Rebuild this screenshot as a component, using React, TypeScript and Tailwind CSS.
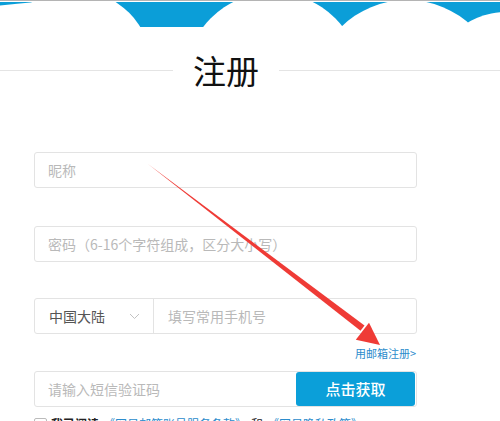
import { useState } from "react";

const CloudBand = () => (
  <svg width="500" height="27" viewBox="0 0 500 27" className="block">
    <rect x="0" y="1" width="500" height="25" fill="#0b9ed8" />
    <path d="M0 4.5 Q 18 2.5 33 1.2 L 60 27 L 0 27 Z" fill="#fff" />
    <circle cx="74" cy="67" r="78" fill="#fff" />
    <circle cx="273" cy="79.5" r="88" fill="#fff" />
    <circle cx="407" cy="93" r="94" fill="#fff" />
    <circle cx="506" cy="86" r="75" fill="#fff" />
  </svg>
);

const RedArrow = () => (
  <svg
    width="500"
    height="421"
    viewBox="0 0 500 421"
    className="absolute left-0 top-0 pointer-events-none"
  >
    <polygon points="148,164 364.5,325.5 360.5,330.8" fill="#ef3b36" />
    <polygon points="380,345 355.8,339.8 369,322.8" fill="#ef3b36" />
  </svg>
);

const TextInput = ({ placeholder }: { placeholder: string }) => (
  <div className="h-[36px] w-full rounded-[3px] border border-[#e3e3e3] bg-white flex items-center">
    <input
      className="w-full h-full px-[13px] text-[14px] outline-none bg-transparent placeholder:text-[#b9b9b9] text-[#333]"
      placeholder={placeholder}
    />
  </div>
);

const App = () => {
  const [agree, setAgree] = useState(false);

  return (
    <div
      className="relative w-[500px] h-[421px] overflow-hidden bg-white"
      style={{ fontFamily: '"Noto Sans CJK SC", "Noto Sans", sans-serif' }}
    >
      <div className="h-px bg-[#b4b4b4]" />
      <CloudBand />

      {/* title */}
      <div className="flex items-center mt-[19px] h-[46px]">
        <div className="w-[173px] h-px bg-[#e4e4e4]" />
        <div className="w-[106px] text-center text-[33px] leading-none text-[#111]">
          注册
        </div>
        <div className="flex-1 h-px bg-[#e4e4e4]" />
      </div>

      {/* form */}
      <div className="ml-[34px] w-[383px] mt-[59px] flex flex-col">
        <TextInput placeholder="昵称" />

        <div className="mt-[38px]">
          <TextInput placeholder="密码（6-16个字符组成，区分大小写）" />
        </div>

        <div className="mt-[36px] h-[36px] rounded-[3px] border border-[#e3e3e3] flex items-center">
          <div className="w-[119px] h-full flex items-center justify-between pl-[14px] pr-[13px] border-r border-[#e3e3e3]">
            <span className="text-[14px] text-[#555]">中国大陆</span>
            <svg width="11" height="7" viewBox="0 0 11 7">
              <path d="M1 1 L5.5 5.5 L10 1" stroke="#c2c2c2" strokeWidth="1" fill="none" />
            </svg>
          </div>
          <input
            className="flex-1 h-full px-[14px] text-[14px] outline-none bg-transparent placeholder:text-[#b9b9b9]"
            placeholder="填写常用手机号"
          />
        </div>

        <div className="flex justify-end mt-[11px] h-[16px] items-center">
          <span className="text-[11px] leading-none text-[#2b8ccc] pr-[1px]">
            用邮箱注册&gt;
          </span>
        </div>

        <div className="mt-[10px] h-[36px] rounded-[3px] border border-[#e3e3e3] flex items-center">
          <input
            className="flex-1 h-full px-[13px] text-[14px] outline-none bg-transparent placeholder:text-[#b9b9b9]"
            placeholder="请输入短信验证码"
          />
          <button className="w-[119px] h-[34px] mr-px rounded-[3px] bg-[#0b9fd9] text-white text-[15px] font-medium">
            点击获取
          </button>
        </div>

        <div className="mt-[8px] flex items-center gap-[4px] text-[12px] whitespace-nowrap">
          <button
            onClick={() => setAgree(!agree)}
            className="w-[13px] h-[13px] border border-[#bbb] rounded-[2px] bg-white"
          >
            {agree ? "✓" : ""}
          </button>
          <span className="text-[#222] font-bold">我已阅读</span>
          <span className="text-[#2b8ccc]">《网易邮箱账号服务条款》</span>
          <span className="text-[#222]">和</span>
          <span className="text-[#2b8ccc]">《网易隐私政策》</span>
        </div>
      </div>

      <RedArrow />
    </div>
  );
};

export default App;
